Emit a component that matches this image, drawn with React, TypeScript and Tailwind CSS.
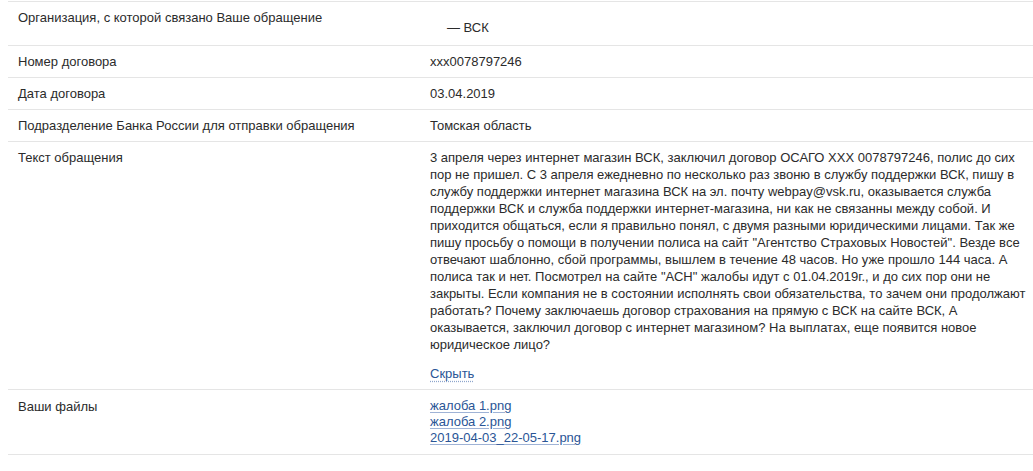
const FONT = "font-['Liberation_Sans',Arial,sans-serif]";

// line breaks kept as in the original block
const APPEAL_LINES = [
  "3 апреля через интернет магазин ВСК, заключил договор ОСАГО XXX 0078797246, полис до сих",
  "пор не пришел. С 3 апреля ежедневно по несколько раз звоню в службу поддержки ВСК, пишу в",
  "службу поддержки интернет магазина ВСК на эл. почту webpay@vsk.ru, оказывается служба",
  "поддержки ВСК и служба поддержки интернет-магазина, ни как не связанны между собой. И",
  "приходится общаться, если я правильно понял, с двумя разными юридическими лицами. Так же",
  'пишу просьбу о помощи в получении полиса на сайт "Агентство Страховых Новостей". Везде все',
  "отвечают шаблонно, сбой программы, вышлем в течение 48 часов. Но уже прошло 144 часа. А",
  'полиса так и нет. Посмотрел на сайте "АСН" жалобы идут с 01.04.2019г., и до сих пор они не',
  "закрыты. Если компания не в состоянии исполнять свои обязательства, то зачем они продолжают",
  "работать? Почему заключаешь договор страхования на прямую с ВСК на сайте ВСК, А",
  "оказывается, заключил договор с интернет магазином? На выплатах, еще появится новое",
  "юридическое лицо?",
];

const FILES = ["жалоба 1.png", "жалоба 2.png", "2019-04-03_22-05-17.png"];

function Row({
  label,
  children,
  className = "",
}: {
  label: string;
  children: React.ReactNode;
  className?: string;
}) {
  return (
    <div className={`flex border-b border-[#e5e5e5] pl-[10px] ${className}`}>
      <div className="w-[412px] shrink-0">{label}</div>
      <div className="min-w-0 flex-1">{children}</div>
    </div>
  );
}

export default function App() {
  return (
    <div
      className={`${FONT} min-h-[471px] bg-white text-[13px] leading-[17px] text-[#2b2b2b]`}
    >
      <div className="ml-[8px] pt-[1px]">
        <div className="border-t border-[#e5e5e5]">
          <Row label="Организация, с которой связано Ваше обращение" className="pt-[7px] pb-[9px]">
            <div className="mt-[10px] pl-[17px]">— ВСК</div>
          </Row>
          <Row label="Номер договора" className="py-[7px]">
            xxx0078797246
          </Row>
          <Row label="Дата договора" className="py-[7px]">
            03.04.2019
          </Row>
          <Row label="Подразделение Банка России для отправки обращения" className="py-[7px]">
            Томская область
          </Row>
          <Row label="Текст обращения" className="py-[7px]">
            <p>
              {APPEAL_LINES.map((line, i) => (
                <span key={i} className="block whitespace-nowrap">
                  {line}
                </span>
              ))}
            </p>
            <div className="mt-[12px]">
              <a
                href="#"
                className="text-[#2a5596] underline decoration-dotted decoration-[#8fa6cc] underline-offset-[3px]"
              >
                Скрыть
              </a>
            </div>
          </Row>
          <Row label="Ваши файлы" className="pt-[8px] pb-[8px]">
            <div className="flex flex-col items-start">
              {FILES.map((f) => (
                <a
                  key={f}
                  href="#"
                  className="leading-[16px] text-[#2a5596] underline decoration-[#9fb3d6] underline-offset-[2px]"
                >
                  {f}
                </a>
              ))}
            </div>
          </Row>
        </div>
      </div>
    </div>
  );
}
